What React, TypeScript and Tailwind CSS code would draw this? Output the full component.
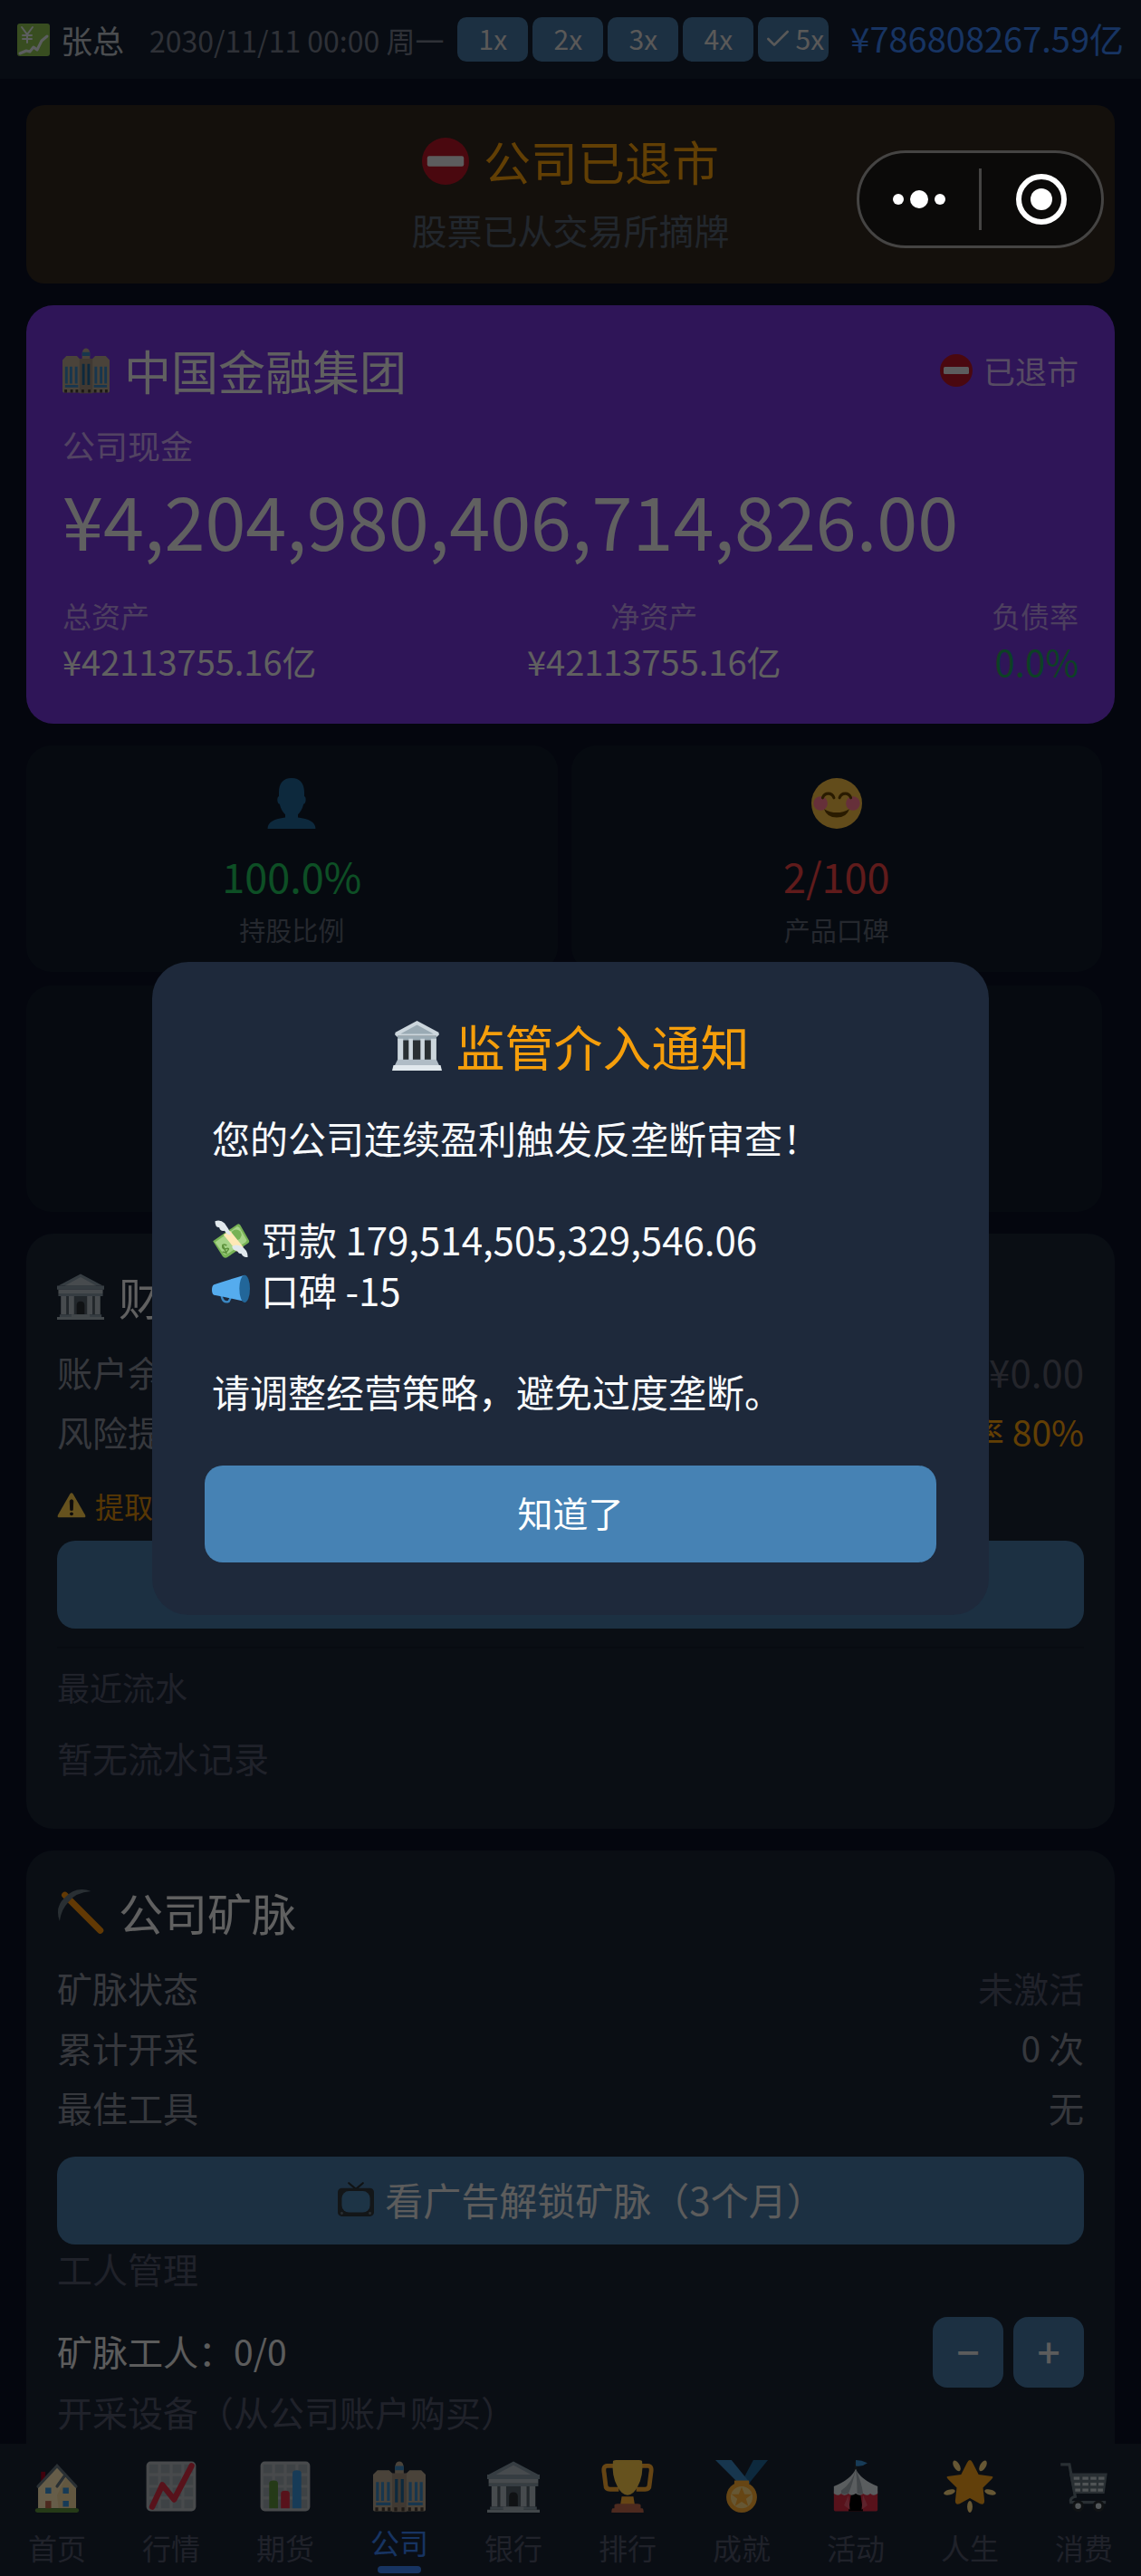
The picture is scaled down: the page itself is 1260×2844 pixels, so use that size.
import { useState } from "react";
import type { ReactNode } from "react";
import { Check } from "lucide-react";

function Svg({ className, children }: { className: string; children: ReactNode }) {
  return (
    <svg viewBox="0 0 36 36" className={`shrink-0 ${className}`} aria-hidden="true">
      {children}
    </svg>
  );
}

const icons: Record<string, ReactNode> = {
  yenChart: (
    <>
      <rect width="36" height="36" rx="3" fill="#8cc152" />
      <path d="M5 4l6 8 6-8M11 12v9M6 13h10M6 17h10" stroke="#e6ecef" strokeWidth="2" fill="none" strokeLinecap="round" />
      <path d="M3 33l7-3 4 1 4-5 4 3 5-10 6-5" stroke="#e6ecef" strokeWidth="3" fill="none" strokeLinecap="round" strokeLinejoin="round" />
    </>
  ),
  noEntry: (
    <>
      <circle cx="18" cy="18" r="18" fill="#b81626" />
      <rect x="4" y="14" width="28" height="8" rx="1.5" fill="#e6e7e8" />
    </>
  ),
  company: (
    <>
      <path d="M15 6q0-5 3-5t3 5v4h-6zM0 10l3-3h8l3 3v25H1q-1 0-1-1zM36 10l-3-3h-8l-3 3v25h13q1 0 1-1z" fill="#b8a992" />
      <path d="M13 9h10v26.500H13z" fill="#a08f7d" />
      <path d="M2 15h2v13H2zM5.500 15h2v13h-2zM9.500 15h2v13h-2zM24.500 15h2v13h-2zM28.500 15h2v13h-2zM32 15h2v13h-2zM2 29h10v2H2zM24 29h10v2H24zM15 4h6v3h-6z" fill="#3b88c3" />
      <path d="M15 13h2v16h-2zM19 13h2v16h-2z" fill="#226699" />
      <path d="M1.500 32.500h2V35h-2zM6 32.500h2V35H6zM10 32.500h2V35h-2zM14.500 32.500h2V35h-2zM19.500 32.500h2V35h-2zM24 32.500h2V35h-2zM28.500 32.500h2V35h-2zM32.500 32.500h2V35h-2z" fill="#4a4038" />
    </>
  ),
  person: (
    <path d="M18 0c-6 0-9 4-9 10v3c-1.500 0-1.500 5 .5 5.500.8 3.500 2.500 6 4 7.300V28C6 29 1 31 1 36h34c0-5-5-7-12.500-8v-2.200c1.500-1.300 3.200-3.800 4-7.300 2-.5 2-5.500.5-5.500v-3c0-6-3-10-9-10z" fill="#226699" />
  ),
  smile: (
    <>
      <circle cx="18" cy="18" r="18" fill="#f5bd45" />
      <circle cx="6.500" cy="18" r="5" fill="#ff7892" />
      <circle cx="29.500" cy="18" r="5" fill="#ff7892" />
      <path d="M8 14q1-3 4-3t4 3M20 14q1-3 4-3t4 3" stroke="#664500" strokeWidth="2" fill="none" strokeLinecap="round" />
      <path d="M9 22q9 5 18 0-2 6-9 6t-9-6z" fill="#664500" />
    </>
  ),
  classical: (
    <>
      <path d="M18 0L3 8q-1 .7-1 2l2 2h28l2-2q0-1.300-1-2z" fill="#ccd6dd" />
      <path d="M18 3L6 9.500h24z" fill="#9aaab4" />
      <path d="M4 11h28v19H4z" fill="#292f33" />
      <path d="M4 11h28v3H4z" fill="#9aaab4" />
      <path d="M4 13h4v17H4zM12 13h3v17h-3zM20.500 13h3v17h-3zM28 13h4v17h-4z" fill="#ccd6dd" />
      <path d="M4 28h28l2 4H2z" fill="#b0bcc6" />
      <path d="M1 32h34l1 4H0z" fill="#e1e8ed" />
    </>
  ),
  bank: (
    <>
      <path d="M18 1L1 10h34z" fill="#8899a6" />
      <path d="M18 3.500L6 10h24z" fill="#b2bcc3" />
      <path d="M0 10h36v3H0zM1 16h34v2H1z" fill="#8899a6" />
      <path d="M1 13h34v3H1z" fill="#b2bcc3" />
      <path d="M3 18h30v14H3z" fill="#56616b" />
      <path d="M3 18h4v14H3zM9 18h4v14H9zM23 18h4v14h-4zM29 18h4v14h-4z" fill="#b2bcc3" />
      <path d="M15 32v-7q0-3 3-3t3 3v7z" fill="#292f33" />
      <path d="M2 32h32v2H2z" fill="#8899a6" />
      <path d="M0 34h36v2H0zM11 32h14v4H11z" fill="#a6b2ba" />
    </>
  ),
  moneyWings: (
    <>
      <path d="M1 20L24 4q2-1 3 1l8 14q1 2-1 3L15 35q-3 2-5-1z" fill="#77b255" />
      <path d="M3 21L24 6l2 1 7 12-1 2-19 12-2-1z" fill="#a6d388" />
      <circle cx="23" cy="14" r="5" fill="#77b255" />
      <path d="M11 14l6-4 13 16-6 4z" fill="#ffe8b6" />
      <path d="M3 1q5-2 9 2 4 5 6 11-4 0-6-4-4 1-5-3-4 0-4-6zM19 25q4-3 9 0 6 3 6 10-4 1-6-3-3 0-4-3-4 0-5-4z" fill="#e1e8ed" />
      <path d="M14 24q-4-2-4 1t4 2-1 4l-3-1M10 23l4 9" stroke="#5c913b" strokeWidth="1.300" fill="none" />
    </>
  ),
  megaphone: (
    <>
      <path d="M9 23q1 8 7 6l2-4" stroke="#3b88c3" strokeWidth="2" fill="none" />
      <path d="M31 4Q14 9 2 13q-2 1-2 5t2 5q12 2 29 6z" fill="#55acee" />
      <ellipse cx="31" cy="17" rx="5" ry="13" fill="#226699" />
    </>
  ),
  warning: (
    <>
      <path d="M2.500 33Q0 33 1 30L16 4q2-3 4 0l15 26q1 3-1.500 3z" fill="#ffcc4d" />
      <path d="M16 13q0-2 2-2t2 2l-.6 11h-2.800z" fill="#231f20" stroke="#231f20" />
      <circle cx="18" cy="28.500" r="2.200" fill="#231f20" />
    </>
  ),
  pickaxe: (
    <>
      <path d="M6 5l27 27" stroke="#f4900c" strokeWidth="5" strokeLinecap="round" />
      <path d="M2 25Q-2 14 6 7 14-2 26 2 14 3 9 10q-6 6-7 15z" fill="#66757f" />
    </>
  ),
  tv: (
    <>
      <path d="M11 2l7 6 7-6" stroke="#292f33" strokeWidth="2" fill="none" strokeLinecap="round" />
      <rect y="7" width="36" height="28" rx="4" fill="#31373d" />
      <rect x="4" y="10" width="28" height="21" rx="7" fill="#4a83b0" />
      <circle cx="4" cy="32" r="1.300" fill="#66757f" />
      <circle cx="32" cy="32" r="1.300" fill="#66757f" />
    </>
  ),
  home: (
    <>
      <path d="M7 8h3v7H7z" fill="#a0041e" />
      <path d="M5 19L18 4l13 15v14H5z" fill="#ffe8b6" />
      <path d="M18 24l6-12 7 8v13H19z" fill="#f5d9a0" />
      <path d="M5 18L18 4l13 14M18 18l5-7" stroke="#66757f" strokeWidth="2" fill="none" strokeLinecap="round" />
      <path d="M10 19h4v4h-4zM22 19h4v4h-4zM22 28h4v4h-4z" fill="#3b94d9" />
      <path d="M10 28h4v6h-4z" fill="#c1694f" />
      <rect x="3" y="33" width="30" height="3" rx="1.500" fill="#5c913b" />
    </>
  ),
  chartUp: (
    <>
      <rect x="1" y="1" width="34" height="34" rx="3" fill="#b4babe" />
      <path d="M3 3h6v6H3zM11 3h6v6h-6zM19 3h6v6h-6zM27 3h6v6h-6zM3 11h6v6H3zM11 11h6v6h-6zM19 11h6v6h-6zM27 11h6v6h-6zM3 19h6v6H3zM11 19h6v6h-6zM19 19h6v6h-6zM27 19h6v6h-6zM3 27h6v6H3zM11 27h6v6h-6zM19 27h6v6h-6zM27 27h6v6h-6z" fill="#9ba5ac" />
      <path d="M5 32l7-15 8 10L32 4" stroke="#dd2e44" strokeWidth="4" fill="none" strokeLinecap="round" strokeLinejoin="round" />
    </>
  ),
  barChart: (
    <>
      <rect x="1" y="1" width="34" height="34" rx="3" fill="#b4babe" />
      <path d="M3 3h6v6H3zM11 3h6v6h-6zM19 3h6v6h-6zM27 3h6v6h-6zM3 11h6v6H3zM11 11h6v6h-6zM19 11h6v6h-6zM27 11h6v6h-6zM3 19h6v6H3zM11 19h6v6h-6zM19 19h6v6h-6zM27 19h6v6h-6zM3 27h6v6H3zM11 27h6v6h-6zM19 27h6v6h-6zM27 27h6v6h-6z" fill="#9ba5ac" />
      <path d="M7 33V16q0-2 3-2t3 2v17z" fill="#5c913b" />
      <path d="M15 33V23q0-2 3-2t3 2v10z" fill="#dd2e44" />
      <path d="M23 33V9q0-2 3-2t3 2v24z" fill="#3b94d9" />
    </>
  ),
  trophy: (
    <>
      <path d="M9 4H4Q1 4 2 9l1 8q0 3 3 3h6M27 4h5q3 0 2 5l-1 8q0 3-3 3h-6" stroke="#ffac33" strokeWidth="3" fill="none" />
      <path d="M14 25h8l1 6H13z" fill="#ffac33" />
      <path d="M8 1q0-1 2-1h16q2 0 2 1 1 10-3 17-3 6-7 6t-7-6Q7 11 8 1z" fill="#ffcc4d" />
      <path d="M9 31q0-1 2-1h14q2 0 2 1v2h1q1 0 1 3H7q0-3 1-3h1z" fill="#c1694f" />
    </>
  ),
  medal: (
    <>
      <path d="M18 15L26 0h10L23 16z" fill="#226699" />
      <path d="M0 0h11l13 16h-8z" fill="#3b88c3" />
      <circle cx="18" cy="25.500" r="10.500" fill="#ffac33" />
      <circle cx="18" cy="25.500" r="7.500" fill="#ffd983" />
      <path d="M18 18.500l2 5h5l-4 3 1.500 5-4.500-3-4.500 3 1.500-5-4-3h5z" fill="#ffac33" />
      <path d="M13 14h10v3H13z" fill="#ffac33" />
    </>
  ),
  circus: (
    <>
      <path d="M18 7V1" stroke="#292f33" strokeWidth="2" />
      <path d="M18 0q4 0 8 2-4 3-8 2z" fill="#3b94d9" />
      <path d="M3 21h30v13q0 1-1 1H4q-1 0-1-1z" fill="#dd2e44" />
      <path d="M15 22h6l2 13H13z" fill="#000" />
      <path d="M13 24l1 10-4-3zM23 24l-1 10 4-3z" fill="#ea596e" />
      <path d="M18 6q3 7 15 12v5q-3 2-5 0-2 2-5 0-2 2-5 0-3 2-5 0-3 2-5 0-2 2-5 0v-5Q15 13 18 6z" fill="#e1e8ed" />
      <path d="M18 6q-2 9-10 15v2q2 1 5 0 3-7 5-17zM18 6q1 9 1 17 3 1 4 0-1-8-5-17z" fill="#a7b1b8" />
    </>
  ),
  star: (
    <>
      <path d="M18 0q1 0 2 2l4 8 8 1q3 0 1 2l-6 6 1 9q0 3-3 2l-7-4-7 4q-3 1-3-2l1-9-6-6q-2-2 1-2l8-1 4-8q1-2 2-2z" fill="#f4a01c" />
      <g fill="#ffd983">
        <ellipse cx="9" cy="4" rx="2" ry="4" transform="rotate(-30 9 4)" />
        <ellipse cx="27" cy="4" rx="2" ry="4" transform="rotate(30 27 4)" />
        <ellipse cx="4" cy="22" rx="4" ry="1.800" transform="rotate(-15 4 22)" />
        <ellipse cx="32" cy="22" rx="4" ry="1.800" transform="rotate(15 32 22)" />
        <ellipse cx="18" cy="32" rx="1.800" ry="4" />
      </g>
    </>
  ),
  cart: (
    <>
      <path d="M2 3h6l4 22q-4 1-3 4h24" stroke="#66757f" strokeWidth="2" fill="none" />
      <path d="M8 9h26l-2 14H11z" fill="#66757f" />
      <path d="M11 11.500h4v2h-4zM17 11.500h4v2h-4zM22.500 11.500h4v2h-4zM28 11.500h4v2h-4zM11.500 15.500h4v2h-4zM17 15.500h4v2h-4zM22.500 15.500h4v2h-4zM28 15.500h3.500v2H28zM12 19.500h3.500v2H12zM17 19.500h4v2h-4zM22.500 19.500h4v2h-4zM27.500 19.500h3.500v2h-3.500z" fill="#c9d1d6" />
      <circle cx="14" cy="31.500" r="3" fill="#ccd6dd" stroke="#292f33" strokeWidth="2" />
      <circle cx="28" cy="31.500" r="3" fill="#ccd6dd" stroke="#292f33" strokeWidth="2" />
    </>
  ),
};

const speeds = [1, 2, 3, 4, 5];

const tabs = [
  { icon: "home", label: "首页" },
  { icon: "chartUp", label: "行情" },
  { icon: "barChart", label: "期货" },
  { icon: "company", label: "公司" },
  { icon: "bank", label: "银行" },
  { icon: "trophy", label: "排行" },
  { icon: "medal", label: "成就" },
  { icon: "circus", label: "活动" },
  { icon: "star", label: "人生" },
  { icon: "cart", label: "消费" },
];

function Row({ label, value, valueClass }: { label: string; value: string; valueClass: string }) {
  return (
    <div className="flex justify-between text-[39px] leading-[66px]">
      <dt className="text-[#888d98]">{label}</dt>
      <dd className={valueClass}>{value}</dd>
    </div>
  );
}

function StatCard({ icon, value, label, valueClass }: { icon: string; value: string; label: string; valueClass: string }) {
  return (
    <div className="flex flex-col items-center rounded-[28px] bg-[#111b2a] pt-9 pb-[29px]">
      <Svg className="size-14">{icons[icon]}</Svg>
      <div className={`mt-6 text-[45px] leading-[56px] ${valueClass}`}>{value}</div>
      <div className="mt-[13px] text-[29px] leading-9 text-[#5d6473]">{label}</div>
    </div>
  );
}

function CardTitle({ icon, children }: { icon: string; children: ReactNode }) {
  return (
    <h2 className="flex items-center gap-4 text-[49px] leading-[60px] text-[#efefef]">
      <Svg className="size-[52px]">{icons[icon]}</Svg>
      {children}
    </h2>
  );
}

export default function App() {
  const [speed, setSpeed] = useState(5);
  const [activeTab, setActiveTab] = useState("公司");
  const [workers, setWorkers] = useState(0);
  const [showNotice, setShowNotice] = useState(true);

  return (
    <div className="relative flex h-screen flex-col overflow-hidden bg-[#0a1124] font-['Noto_Sans_CJK_SC',sans-serif]">
      {/* Status bar */}
      <header className="flex h-[87px] shrink-0 items-center bg-[#142030] px-[19px]">
        <Svg className="size-9">{icons.yenChart}</Svg>
        <span className="ml-3 text-[35px] leading-10 whitespace-nowrap text-[#bcc0c8]">张总</span>
        <span className="ml-7 text-[32px] leading-10 whitespace-nowrap text-[#757b8a]">2030/11/11 00:00 周一</span>
        <div className="ml-auto flex gap-[5px]">
          {speeds.map((s) => (
            <button
              key={s}
              onClick={() => setSpeed(s)}
              className="flex h-[49px] w-[78px] items-center justify-center gap-1 rounded-[10px] bg-[#4678a5] pb-0.5 text-[30px] text-[#e0dedc]"
            >
              {speed === s && <Check className="size-8" strokeWidth={2} />}
              {s}x
            </button>
          ))}
        </div>
        <span className="ml-6 pb-1 text-[38px] leading-10 whitespace-nowrap text-[#3b82f6]">¥786808267.59亿</span>
      </header>

      <main className="min-h-0 flex-1 overflow-hidden px-[29px] pt-[29px]">
        {/* Delisting banner */}
        <section className="rounded-[20px] bg-[#322820] pt-8 pb-[33px] text-center">
          <h1 className="flex items-center justify-center gap-4 text-[52px] leading-[60px] text-[#f59e0b]">
            <Svg className="size-[52px]">{icons.noEntry}</Svg>
            公司已退市
          </h1>
          <p className="mt-5 mb-0.5 text-[39px] leading-[50px] text-[#566170]">股票已从交易所摘牌</p>
        </section>

        {/* Company overview */}
        <section className="mt-6 rounded-[30px] bg-[#7635dc] px-10 pt-[42px] pb-[45px] text-[#f0f0f0]">
          <div className="flex items-center justify-between leading-[60px]">
            <h2 className="flex items-center gap-4 text-[52px]">
              <Svg className="size-[52px]">{icons.company}</Svg>
              中国金融集团
            </h2>
            <div className="flex items-center gap-3 text-[35px] text-[#f5e6ff]/80">
              <Svg className="size-9">{icons.noEntry}</Svg>
              已退市
            </div>
          </div>
          <div className="mt-[30px] text-[36px] leading-[44px] text-[#cca8f5]">公司现金</div>
          <div className="mt-3 text-[81px] leading-[96px] whitespace-nowrap">¥4,204,980,406,714,826.00</div>
          <dl className="mt-[38px] flex justify-between text-[38px]">
            <div>
              <dt className="text-[32px] leading-10 text-[#c09ded]">总资产</dt>
              <dd className="mt-[7px] leading-[48px]">¥42113755.16亿</dd>
            </div>
            <div className="text-center">
              <dt className="text-[32px] leading-10 text-[#c09ded]">净资产</dt>
              <dd className="mt-[7px] leading-[48px]">¥42113755.16亿</dd>
            </div>
            <div className="text-right">
              <dt className="text-[32px] leading-10 text-[#c09ded]">负债率</dt>
              <dd className="mt-[7px] text-[40px] leading-[48px] text-[#22a05e]">0.0%</dd>
            </div>
          </dl>
        </section>

        {/* Key stats */}
        <section className="mt-6 grid grid-cols-2 gap-[15px] pr-[14px]">
          <StatCard icon="person" value="100.0%" label="持股比例" valueClass="text-[#22c55e]" />
          <StatCard icon="smile" value="2/100" label="产品口碑" valueClass="text-[#ef4444]" />
          <div className="h-[250px] rounded-[28px] bg-[#111b2a]" />
          <div className="h-[250px] rounded-[28px] bg-[#111b2a]" />
        </section>

        {/* Finance account */}
        <section className="mt-6 rounded-[30px] bg-[#192334] px-[34px] pt-[39px] pb-[55px]">
          <CardTitle icon="bank">财务</CardTitle>
          <dl className="mt-5">
            <Row label="账户余额" value="¥0.00" valueClass="text-[42px] text-[#5a5e6b]" />
            <Row label="风险提示" value="概率 80%" valueClass="text-[#f59e0b]" />
          </dl>
          <p className="mt-[29px] flex items-center gap-[10px] text-[32px] leading-10 text-[#d98a0b]">
            <Svg className="size-8">{icons.warning}</Svg>
            提取有风险
          </p>
          <button className="mt-[19px] h-[97px] w-full rounded-[20px] bg-[#4678a5] text-[42px] text-[#e6e6e6]">提取资金</button>
          <div className="mt-5 border-t-2 border-[#141c2b] pt-5 text-[36px] leading-[44px] text-[#50556a]">最近流水</div>
          <p className="mt-8 text-[39px] leading-[48px] text-[#50556a]">暂无流水记录</p>
        </section>

        {/* Mine */}
        <section className="mt-6 rounded-[30px] bg-[#192334] px-[34px] pt-[38px] pb-14">
          <CardTitle icon="pickaxe">公司矿脉</CardTitle>
          <dl className="mt-5">
            <Row label="矿脉状态" value="未激活" valueClass="text-[#50556a]" />
            <Row label="累计开采" value="0 次" valueClass="text-[#888d98]" />
            <Row label="最佳工具" value="无" valueClass="text-[#888d98]" />
          </dl>
          <button className="mt-[22px] flex h-[97px] w-full items-center justify-center gap-3 rounded-[20px] bg-[#4678a5] pb-1 pl-6 text-[42px] text-[#e6e6e6]">
            <Svg className="size-10">{icons.tv}</Svg>
            看广告解锁矿脉（3个月）
          </button>
          <h3 className="mt-0.5 text-[39px] leading-[48px] text-[#50556a]">工人管理</h3>
          <div className="mt-[30px] flex items-center justify-between">
            <span className="pb-1 text-[39px] leading-[48px] text-[#e6e6e6]">矿脉工人：{workers}/0</span>
            <div className="flex gap-[11px] text-[44px] font-medium text-[#e6e6e6]">
              <button
                aria-label="减少工人"
                onClick={() => setWorkers(Math.max(0, workers - 1))}
                className="flex size-[78px] items-center justify-center rounded-2xl bg-[#4678a5] pb-1"
              >
                −
              </button>
              <button
                aria-label="增加工人"
                onClick={() => setWorkers(Math.min(0, workers + 1))}
                className="flex size-[78px] items-center justify-center rounded-2xl bg-[#4678a5] pb-1"
              >
                +
              </button>
            </div>
          </div>
          <h3 className="mt-0.5 text-[39px] leading-[48px] text-[#50556a]">开采设备（从公司账户购买）</h3>
        </section>
      </main>

      {/* Bottom tabs */}
      <nav className="grid h-[146px] shrink-0 grid-cols-10 bg-[#192434]">
        {tabs.map((tab) => (
          <button key={tab.label} onClick={() => setActiveTab(tab.label)} className="flex flex-col items-center pt-[18px]">
            <Svg className="size-[58px]">{icons[tab.icon]}</Svg>
            {activeTab === tab.label ? (
              <>
                <span className="mt-3 text-[32px] leading-10 text-[#3b82f6]">{tab.label}</span>
                <span className="mt-[7px] h-2 w-12 rounded-full bg-[#3b82f6]" />
              </>
            ) : (
              <span className="mt-[18px] text-[32px] leading-10 text-[#50556a]">{tab.label}</span>
            )}
          </button>
        ))}
      </nav>

      {/* Notice dialog */}
      {showNotice && (
        <div className="fixed inset-0 flex items-center justify-center bg-black/60 px-[168px]">
          <div
            role="dialog"
            aria-modal="true"
            aria-labelledby="notice-title"
            className="w-full rounded-[40px] bg-[#1e293b] px-[58px] pt-[60px] pb-[58px]"
          >
            <h2 id="notice-title" className="flex items-center justify-center gap-4 text-[54px] leading-[66px] text-[#f59e0b]">
              <Svg className="size-[55px]">{icons.classical}</Svg>
              监管介入通知
            </h2>
            <div className="mt-10 px-2 text-[42px] leading-[56px] text-[#f8fafc]">
              <p>您的公司连续盈利触发反垄断审查！</p>
              <ul className="my-14">
                <li className="flex items-center gap-3">
                  <Svg className="size-[42px]">{icons.moneyWings}</Svg>
                  罚款 179,514,505,329,546.06
                </li>
                <li className="flex items-center gap-3">
                  <Svg className="size-[42px]">{icons.megaphone}</Svg>
                  口碑 -15
                </li>
              </ul>
              <p>请调整经营策略，避免过度垄断。</p>
            </div>
            <button
              onClick={() => setShowNotice(false)}
              className="mt-[54px] h-[107px] w-full rounded-[20px] bg-[#4682b4] pb-1 text-[39px] text-white"
            >
              知道了
            </button>
          </div>
        </div>
      )}

      {/* Mini program capsule */}
      <div className="fixed top-[166px] right-[41px] flex h-[108px] w-[273px] items-center rounded-full border-3 border-[#454443] bg-[#0b0a09]">
        <button aria-label="更多" className="flex flex-1 items-center justify-center gap-[7px]">
          <span className="size-3 rounded-full bg-white" />
          <span className="size-5 rounded-full bg-white" />
          <span className="size-3 rounded-full bg-white" />
        </button>
        <span className="h-[68px] w-[3px] bg-[#454443]" />
        <button aria-label="关闭" className="flex flex-1 items-center justify-center">
          <span className="flex size-14 items-center justify-center rounded-full border-6 border-white">
            <span className="size-6 rounded-full bg-white" />
          </span>
        </button>
      </div>
    </div>
  );
}
